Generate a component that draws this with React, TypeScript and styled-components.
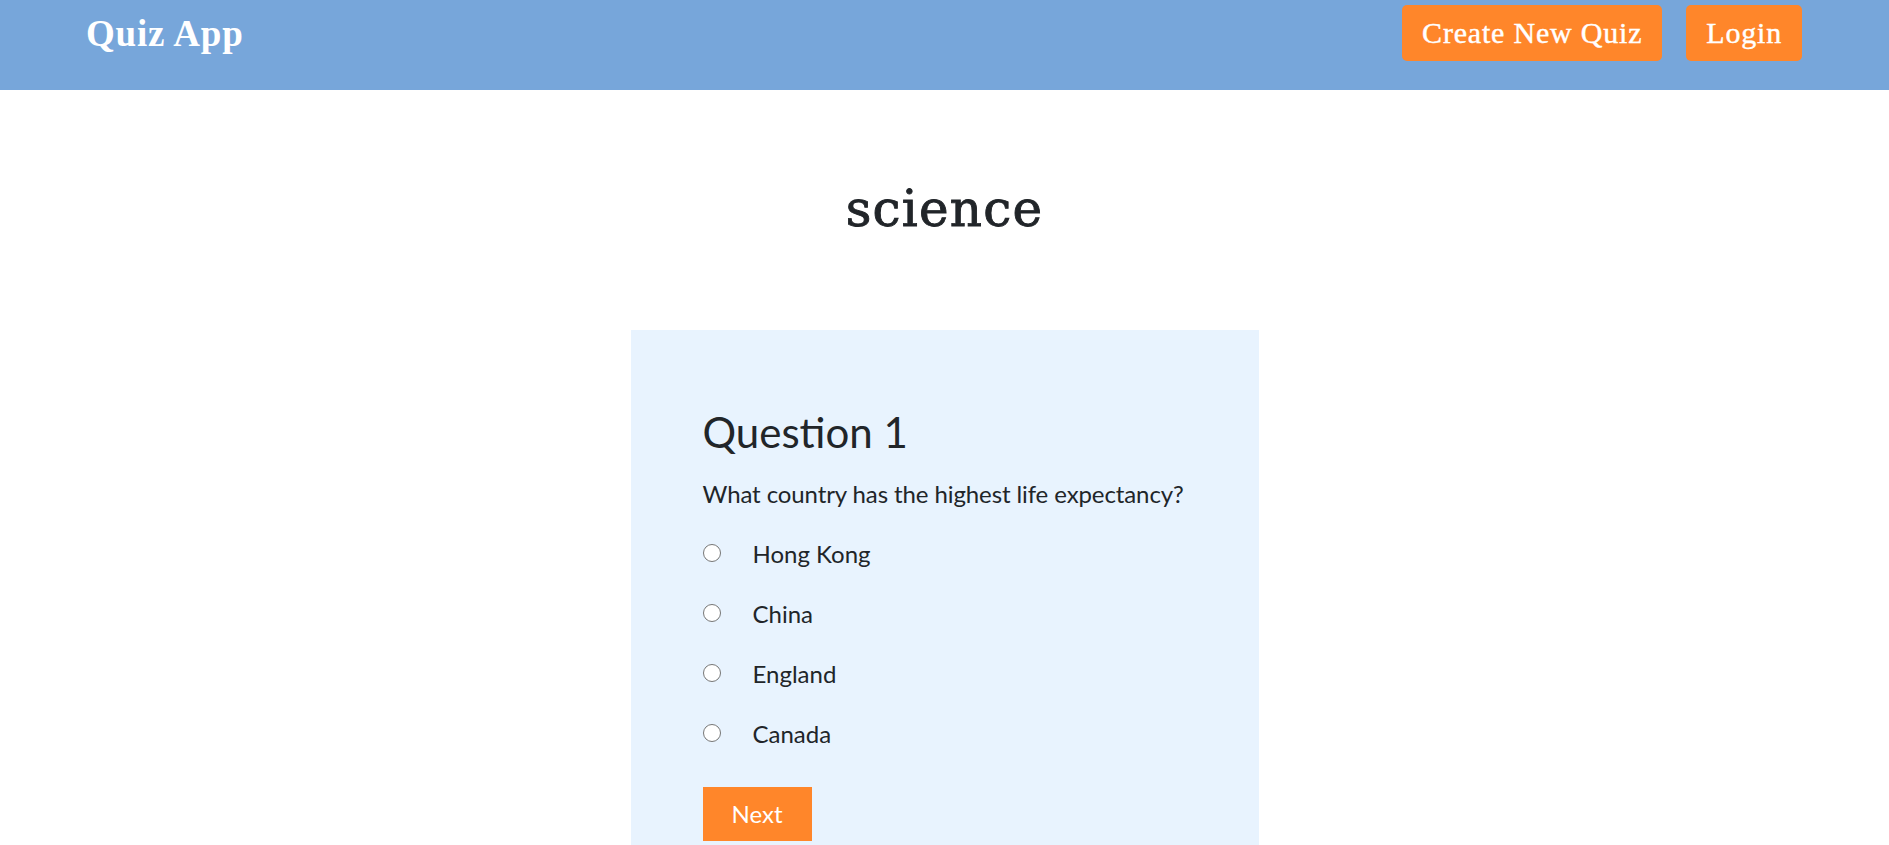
import React from "react";
import styled, { createGlobalStyle } from "styled-components";

const GlobalStyle = createGlobalStyle`
  html, body {
    margin: 0;
    padding: 0;
    background: #ffffff;
  }
  body {
    font-family: "Lato", "Open Sans", sans-serif;
    color: #212529;
  }
  * { box-sizing: border-box; }
`;

const Header = styled.header`
  display: flex;
  justify-content: space-between;
  align-items: flex-start;
  height: 90px;
  padding: 5px 87px 0 86px;
  background: #77a6da;
`;

const Brand = styled.a`
  font-family: "Liberation Serif", "Times New Roman", serif;
  font-weight: 700;
  font-size: 37px;
  letter-spacing: 0.8px;
  line-height: 56px;
  margin-top: 1px;
  color: #ffffff;
  text-decoration: none;
`;

const Nav = styled.nav`
  display: flex;
  gap: 24px;
`;

const NavButton = styled.button`
  height: 56px;
  padding: 0 20px;
  border: none;
  border-radius: 5px;
  background: #ff862a;
  color: #ffffff;
  font-family: "Liberation Serif", "Times New Roman", serif;
  font-size: 30px;
  letter-spacing: 0.8px;
  line-height: 56px;
  -webkit-text-stroke: 0.4px #ffffff;
  cursor: pointer;
`;

const Main = styled.main`
  display: flex;
  flex-direction: column;
  align-items: center;
  padding-top: 86px;
`;

const Title = styled.h1`
  margin: 0;
  height: 67px;
  font-family: "DejaVu Serif", "Liberation Serif", serif;
  font-weight: 400;
  font-size: 50px;
  line-height: 67px;
  letter-spacing: 1.2px;
  -webkit-text-stroke: 0.9px #212529;
  color: #212529;
  text-align: center;
`;

const Card = styled.section`
  width: 628px;
  margin-top: 87px;
  padding: 77px 72px 60px;
  background: #e8f3fe;
`;

const QuestionTitle = styled.h2`
  margin: 0;
  font-family: "Lato", "Open Sans", sans-serif;
  font-weight: 400;
  font-size: 42px;
  line-height: 1.2;
  color: #212529;
`;

const QuestionText = styled.p`
  margin: 19px 0 0;
  font-size: 24px;
  line-height: 36px;
  letter-spacing: -0.1px;
  white-space: nowrap;
  color: #212529;
`;

const Options = styled.div`
  display: flex;
  flex-direction: column;
  gap: 24px;
  margin-top: 24px;
`;

const Option = styled.label`
  display: flex;
  align-items: center;
  gap: 32px;
  height: 36px;
  font-size: 24px;
  line-height: 36px;
  color: #212529;
  cursor: pointer;
`;

const Radio = styled.input`
  appearance: none;
  -webkit-appearance: none;
  width: 18px;
  height: 18px;
  margin: 0 0 2px;
  border: 1.5px solid #767676;
  border-radius: 50%;
  background: #ffffff;
  flex: none;
`;

const NextButton = styled.button`
  display: block;
  margin-top: 35px;
  padding: 9px 29px;
  border: none;
  border-radius: 0;
  background: #ff862a;
  color: #ffffff;
  font-family: "Lato", "Open Sans", sans-serif;
  font-size: 24px;
  line-height: 36px;
  cursor: pointer;
`;

const options = ["Hong Kong", "China", "England", "Canada"];

export default function App() {
  return (
    <>
      <GlobalStyle />
      <Header>
        <Brand href="#">Quiz App</Brand>
        <Nav>
          <NavButton>Create New Quiz</NavButton>
          <NavButton>Login</NavButton>
        </Nav>
      </Header>
      <Main>
        <Title>science</Title>
        <Card>
          <QuestionTitle>Question 1</QuestionTitle>
          <QuestionText>What country has the highest life expectancy?</QuestionText>
          <Options>
            {options.map((o) => (
              <Option key={o}>
                <Radio type="radio" name="answer" value={o} />
                {o}
              </Option>
            ))}
          </Options>
          <NextButton>Next</NextButton>
        </Card>
      </Main>
    </>
  );
}
